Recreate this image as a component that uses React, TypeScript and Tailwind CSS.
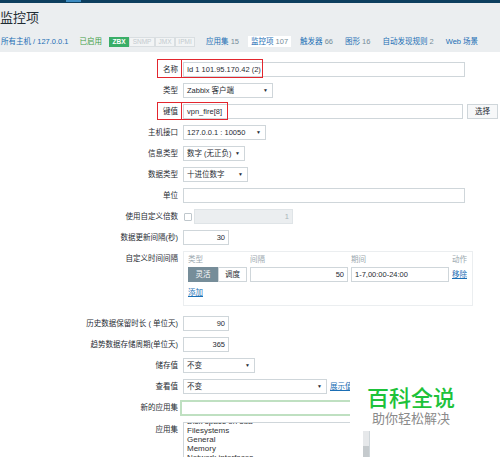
import React from "react";

const link = "text-[#1b6fb5]";
const box = "flex h-[15px] items-center border border-[#cfd6da] bg-white";

const Input = ({ w, value, right }: { w: string; value?: string; right?: boolean }) => (
  <div className={`${box} ${w} px-[3px] ${right ? "justify-end" : ""}`}>
    <span>{value}</span>
  </div>
);

const Sel = ({ w, value }: { w: string; value: string }) => (
  <div className={`${box} ${w} justify-between pl-[3px] pr-[4px]`}>
    <span>{value}</span>
    <span className="text-[5px] leading-none">▼</span>
  </div>
);

const Row = ({
  label,
  children,
  className = "",
}: {
  label: string;
  children: React.ReactNode;
  className?: string;
}) => (
  <div className={`relative flex items-start ${className}`}>
    <div className="w-[183px] shrink-0 pr-[5px] text-right leading-[15px]">{label}</div>
    <div className="flex items-center">{children}</div>
  </div>
);

const Badge = ({ text, w, on }: { text: string; w: string; on?: boolean }) => (
  <span
    className={`flex h-[10px] items-center justify-center border text-[6.5px] ${w} ${
      on ? "border-[#3aae68] bg-[#3aae68] font-bold text-white" : "border-[#d9dee1] bg-[#f2f4f5] text-[#c2cace]"
    }`}
  >
    {text}
  </span>
);

const App: React.FC = () => {
  return (
    <div className="relative h-[457px] w-[500px] overflow-hidden bg-white font-['Liberation_Sans','Noto_Sans_CJK_SC',sans-serif] text-[7.5px] text-[#1f2c33]">
      {/* top bar */}
      <div className="h-[3px] bg-[#0d3f5f] pl-[66px]">
        <div className="h-[2px] w-[15px] bg-[#3d8cc2]" />
      </div>

      {/* header */}
      <div className="h-[49px] bg-[#ebeef0]">
        <div className="pt-[6px] text-[13px] leading-[18px]">监控项</div>
        <div className="mt-[9px] flex h-[11px] items-center pl-[1px]">
          <span className={link}>所有主机 / 127.0.0.1</span>
          <span className="ml-[11px] text-[#429e47]">已启用</span>
          <div className="ml-[7px] flex">
            <Badge text="ZBX" w="w-[20px]" on />
            <Badge text="SNMP" w="w-[26px]" />
            <Badge text="JMX" w="w-[20px]" />
            <Badge text="IPMI" w="w-[20px]" />
          </div>
          <span className="ml-[11px]">
            <span className={link}>应用集</span> <span className="text-[#768d99]">15</span>
          </span>
          <span className="ml-[9px] flex h-[11px] items-center bg-white px-[3px]">
            <span className={link}>监控项</span>&nbsp;<span className="text-[#768d99]">107</span>
          </span>
          <span className="ml-[9px]">
            <span className={link}>触发器</span> <span className="text-[#768d99]">66</span>
          </span>
          <span className="ml-[12px]">
            <span className={link}>图形</span> <span className="text-[#768d99]">16</span>
          </span>
          <span className="ml-[12px]">
            <span className={link}>自动发现规则</span> <span className="text-[#768d99]">2</span>
          </span>
          <span className={`ml-[12px] ${link}`}>Web 场景</span>
        </div>
      </div>

      {/* form */}
      <div className="flex flex-col gap-[6px] pt-[10px]">
        <Row label="名称">
          <Input w="w-[282px]" value="Id 1 101.95.170.42 (2)" />
          <span className="absolute left-[157px] top-[-3px] h-[19px] w-[25px] border-[1.5px] border-[#e3262e]" />
          <span className="absolute left-[181px] top-[-3px] h-[19px] w-[82px] border-[1.5px] border-[#e3262e]" />
        </Row>
        <Row label="类型">
          <Sel w="w-[90px]" value="Zabbix 客户端" />
        </Row>
        <Row label="键值">
          <Input w="w-[280px]" value="vpn_fire[8]" />
          <div className="ml-[4px] flex h-[15px] w-[31px] items-center justify-center border border-[#cfd6da] bg-[#f7f8f9]">
            选择
          </div>
          <span className="absolute left-[157px] top-[-2px] h-[18px] w-[25px] border-[1.5px] border-[#e3262e]" />
          <span className="absolute left-[181px] top-[-2px] h-[18px] w-[47px] border-[1.5px] border-[#e3262e]" />
        </Row>
        <Row label="主机接口">
          <Sel w="w-[83px]" value="127.0.0.1 : 10050" />
        </Row>
        <Row label="信息类型">
          <Sel w="w-[62px]" value="数字 (无正负)" />
        </Row>
        <Row label="数据类型">
          <Sel w="w-[65px]" value="十进位数字" />
        </Row>
        <Row label="单位">
          <Input w="w-[282px]" />
        </Row>
        <Row label="使用自定义倍数">
          <span className="ml-[1px] h-[8px] w-[8px] rounded-[1px] border border-[#bfc7cc] bg-white" />
          <div className="ml-[2px] flex h-[15px] w-[99px] items-center justify-end border border-[#dfe4e7] bg-[#ebeef0] px-[3px] text-[#a9b4ba]">
            1
          </div>
        </Row>
        <Row label="数据更新间隔(秒)">
          <Input w="w-[46px]" value="30" right />
        </Row>
        <Row label="自定义时间间隔" className="mb-[4px]">
          <div className="h-[55px] w-[290px] border border-[#ebeef0] px-[4px] pt-[3px]">
            <div className="flex h-[10px] items-center text-[#9aa7ae]">
              <span className="w-[62px]">类型</span>
              <span className="w-[101px]">间隔</span>
              <span className="w-[101px]">期间</span>
              <span>动作</span>
            </div>
            <div className="mt-[2px] flex h-[15px] items-center">
              <div className="flex h-[15px] w-[59px]">
                <span className="flex w-[30px] items-center justify-center bg-[#768d99] text-white">灵活</span>
                <span className="flex w-[29px] items-center justify-center border border-[#cfd6da] bg-white">调度</span>
              </div>
              <div className={`${box} ml-[3px] w-[98px] justify-end px-[3px]`}>50</div>
              <div className={`${box} ml-[3px] w-[98px] px-[3px]`}>1-7,00:00-24:00</div>
              <span className={`ml-[3px] underline ${link}`}>移除</span>
            </div>
            <div className="mt-[6px] leading-[10px]">
              <span className={`underline ${link}`}>添加</span>
            </div>
          </div>
        </Row>
        <Row label="历史数据保留时长 ( 单位天)">
          <Input w="w-[46px]" value="90" right />
        </Row>
        <Row label="趋势数据存储周期(单位天)">
          <Input w="w-[46px]" value="365" right />
        </Row>
        <Row label="储存值">
          <Sel w="w-[72px]" value="不变" />
        </Row>
        <Row label="查看值">
          <Sel w="w-[144px]" value="不变" />
          <span className={`ml-[3px] whitespace-nowrap underline ${link}`}>展示值映射</span>
        </Row>
        <Row label="新的应用集">
          <div className="-ml-[3px] h-[16px] w-[200px] border-2 border-[#bfe0c1] bg-white" />
        </Row>
        <Row label="应用集">
          <div className="flex h-[40px] w-[187px] border border-[#cfd6da] bg-white">
            <div className="flex-1 overflow-hidden pl-[3px] text-[8px] leading-[9px] text-[#333]">
              <div className="-mt-[6px]">Disk space on sda</div>
              <div>Filesystems</div>
              <div>General</div>
              <div>Memory</div>
              <div>Network interfaces</div>
            </div>
            <div className="flex w-[6px] flex-col bg-[#e6e8ea]">
              <div className="h-[23px]" />
              <div className="flex-1 bg-[#c5cacd]" />
            </div>
          </div>
        </Row>
      </div>

      {/* watermark */}
      <div className="absolute left-[350px] top-[376px] flex h-[55px] w-[150px] flex-col bg-white pl-[17px] pt-[9px]">
        <div className="font-['Noto_Sans_CJK_SC',sans-serif] text-[22px] font-medium leading-[22px] text-[#1dc23a]">
          百科全说
        </div>
        <div className="ml-[5px] mt-[4px] font-['Noto_Sans_CJK_SC',sans-serif] text-[13px] leading-[14px] text-[#8a8a8a]">
          助你轻松解决
        </div>
      </div>
    </div>
  );
};

export default App;
